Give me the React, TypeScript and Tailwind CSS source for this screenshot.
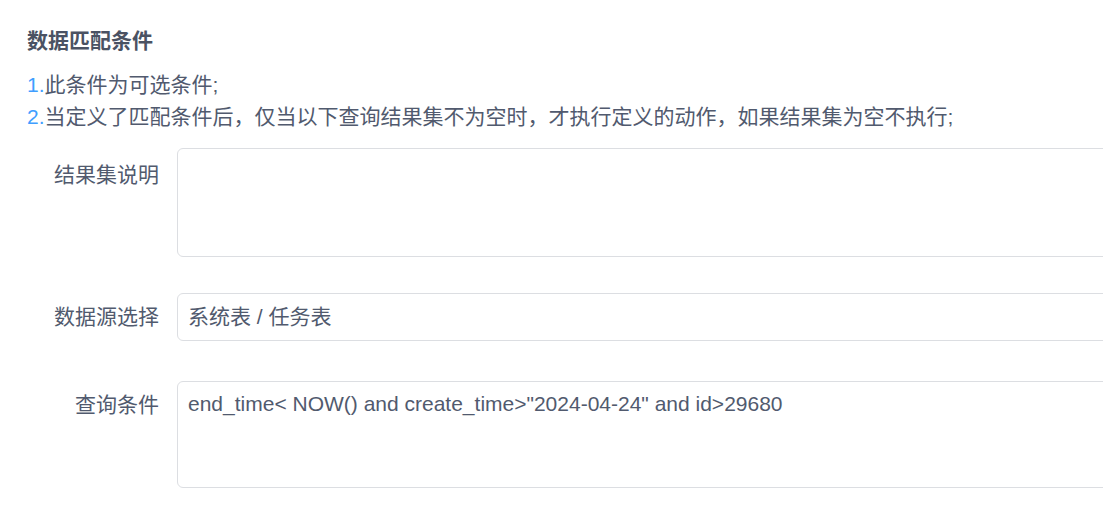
import React from "react";

const font = { fontFamily: '"Liberation Sans", "Noto Sans CJK SC", sans-serif' };

export default function App() {
  return (
    <div className="w-[1103px] h-[509px] overflow-hidden bg-white" style={font}>
      <div className="w-[1200px] pl-[27px] pt-[25px]">
        <div className="text-[21px] leading-[32px] font-bold text-[#4a5263]">数据匹配条件</div>
        <div className="mt-[12px] text-[21px] leading-[32px] text-[#515a6e]">
          <div>
            <span className="text-[#409eff]">1.</span>此条件为可选条件;
          </div>
          <div>
            <span className="text-[#409eff]">2.</span>当定义了匹配条件后，仅当以下查询结果集不为空时，才执行定义的动作，如果结果集为空不执行;
          </div>
        </div>

        <div className="mt-[15px] flex">
          <div className="w-[150px] shrink-0 pr-[18px] pt-[3px] text-right text-[21px] leading-[48px] text-[#515a6e]">结果集说明</div>
          <div className="flex-1 h-[109px] rounded-[6px] border border-[#dcdee2] bg-white"></div>
        </div>

        <div className="mt-[36px] flex">
          <div className="w-[150px] shrink-0 pr-[18px] text-right text-[21px] leading-[48px] text-[#515a6e]">数据源选择</div>
          <div className="flex-1 h-[48px] rounded-[6px] border border-[#dcdee2] bg-white pl-[10px] text-[21px] leading-[46px] text-[#515a6e]">
            系统表 / 任务表
          </div>
        </div>

        <div className="mt-[40px] flex">
          <div className="w-[150px] shrink-0 pr-[18px] text-right text-[21px] leading-[48px] text-[#515a6e]">查询条件</div>
          <div className="flex-1 h-[107px] rounded-[6px] border border-[#dcdee2] bg-white pl-[10px] pt-[6px] text-[21px] leading-[31px] text-[#515a6e]">
            end_time&lt; NOW() and create_time&gt;"2024-04-24" and id&gt;29680
          </div>
        </div>
      </div>
    </div>
  );
}
